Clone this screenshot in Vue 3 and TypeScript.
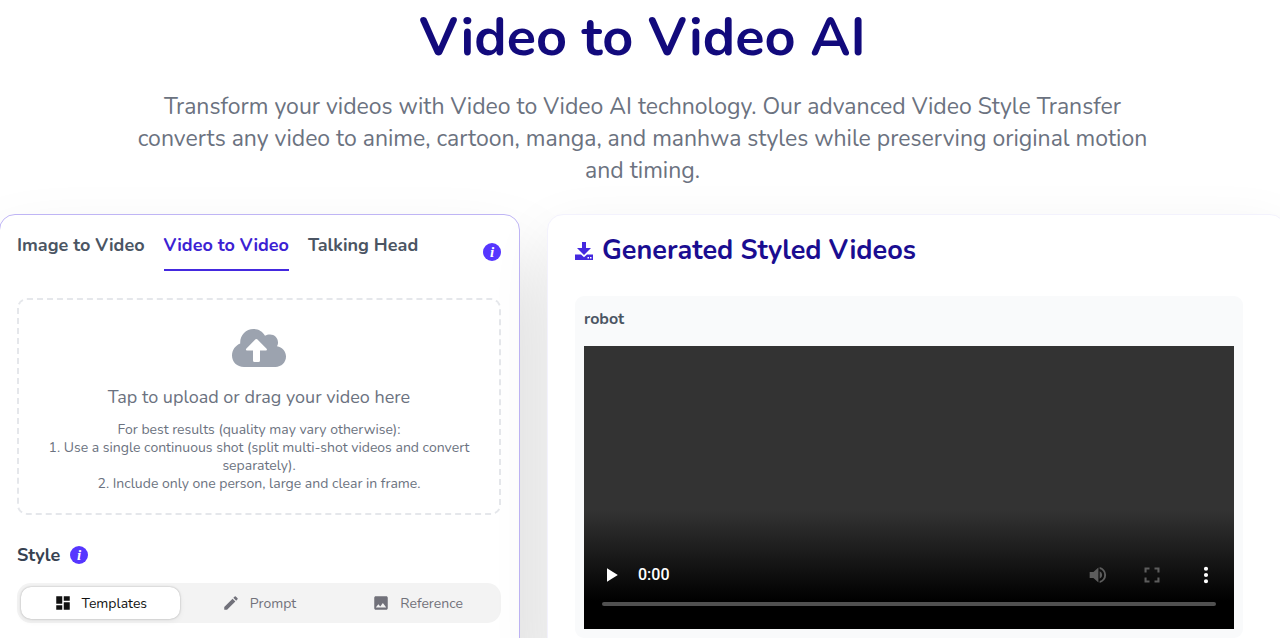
<script setup lang="ts">
import { ref } from 'vue'

const tabs = ['Image to Video', 'Video to Video', 'Talking Head']
const activeTab = ref('Video to Video')

const modes = [
  { name: 'Templates', icon: 'M3 13h8V3H3v10zm0 8h8v-6H3v6zm10 0h8V11h-8v10zm0-18v6h8V3h-8z' },
  {
    name: 'Prompt',
    icon: 'M3 17.25V21h3.75L17.81 9.94l-3.75-3.75L3 17.25zM20.71 7.04a1 1 0 0 0 0-1.41l-2.34-2.34a1 1 0 0 0-1.41 0l-1.83 1.83 3.75 3.75 1.83-1.83z',
  },
  {
    name: 'Reference',
    icon: 'M21 19V5c0-1.1-.9-2-2-2H5c-1.1 0-2 .9-2 2v14c0 1.1.9 2 2 2h14c1.1 0 2-.9 2-2zM8.5 13.5l2.5 3.01L14.5 12l4.5 6H5l3.5-4.5z',
  },
]
const activeMode = ref('Templates')
const position = ref(0)
</script>

<template>
  <main class="page">
    <header class="intro">
      <h1>Video to Video AI</h1>
      <p>
        Transform your videos with Video to Video AI technology. Our advanced Video Style Transfer
        converts any video to anime, cartoon, manga, and manhwa styles while preserving original motion
        and timing.
      </p>
    </header>

    <div class="columns">
      <section class="panel create">
        <div class="tabbar">
          <nav class="tabs">
            <button
              v-for="tab in tabs"
              :key="tab"
              type="button"
              class="tab"
              :class="{ active: tab === activeTab }"
              @click="activeTab = tab"
            >{{ tab }}</button>
          </nav>
          <button type="button" class="info" aria-label="About this tool">i</button>
        </div>

        <button type="button" class="drop">
          <svg class="cloud" viewBox="0 0 54 38" aria-hidden="true">
            <path fill="currentColor" d="M12 38C5 38 0 33 0 26.500C0 21 3.500 16.500 8.200 14.600V13.500C8.200 6 14 0 21.500 0C26.500 0 30.500 2.500 33 6.700C34.500 5.900 36 5.500 38 5.500C42.500 5.500 46 9 46 13.500C46 15 45.700 16 45 17.300C50.200 18.200 54 22.500 54 27.600C54 33.500 49.200 38 43.500 38Z" />
            <path fill="#fff" d="M25.200 10.300L34.600 19.800Q35.500 21.500 34 21.500H28V31.500Q28 33 26.500 33H22.500Q21 33 21 31.500V21.500H15Q13.300 21.500 14.200 19.800L23.500 10.300Q24.300 9.600 25.200 10.300Z" />
          </svg>
          <span class="drop-title">Tap to upload or drag your video here</span>
          <span class="drop-help">
            For best results (quality may vary otherwise):<br />
            1. Use a single continuous shot (split multi-shot videos and convert separately).<br />
            2. Include only one person, large and clear in frame.
          </span>
        </button>

        <div class="style-head">
          <h2>Style</h2>
          <button type="button" class="info" aria-label="About styles">i</button>
        </div>
        <div class="modes">
          <button
            v-for="mode in modes"
            :key="mode.name"
            type="button"
            class="mode"
            :class="{ active: mode.name === activeMode }"
            @click="activeMode = mode.name"
          >
            <svg viewBox="0 0 24 24" aria-hidden="true"><path fill="currentColor" :d="mode.icon" /></svg>
            <span>{{ mode.name }}</span>
          </button>
        </div>
      </section>

      <section class="panel results">
        <h2 class="results-title">
          <svg viewBox="0 0 18 18" aria-hidden="true">
            <path fill="currentColor" d="M7 0h4v6h5L9 13 2 6h5z" />
            <path fill="currentColor" fill-rule="evenodd" d="M0 12.500h6L9 15.200l3-2.700H18V18H0zM12.500 15v1.500H14V15zM15 15v1.500h1.500V15z" />
          </svg>
          <span>Generated Styled Videos</span>
        </h2>
        <article class="result">
          <h3>robot</h3>
          <div class="player">
            <div class="controls">
              <button type="button" class="control play" aria-label="Play">
                <svg viewBox="0 0 24 24"><path fill="currentColor" d="M6 4v16l13-8z" /></svg>
              </button>
              <span class="time">0:00</span>
              <button type="button" class="control" aria-label="Mute" disabled>
                <svg viewBox="0 0 24 24"><path fill="currentColor" d="M2 8.500v7h4.500l6 5.500V3L6.500 8.500zM17 12a4.800 4.800 0 0 0-3-4.500v9a4.800 4.800 0 0 0 3-4.500zM14 2.500v2.300a7.500 7.500 0 0 1 0 14.400v2.300a9.700 9.700 0 0 0 0-19z" /></svg>
              </button>
              <button type="button" class="control" aria-label="Full screen" disabled>
                <svg viewBox="0 0 24 24"><path fill="currentColor" d="M5.500 15H3v6h6v-2.500H5.500zM3 9h2.500V5.500H9V3H3zm15.500 9.500H15V21h6v-6h-2.500zM15 3v2.500h3.500V9H21V3z" /></svg>
              </button>
              <button type="button" class="control" aria-label="More options">
                <svg viewBox="0 0 24 24"><path fill="currentColor" d="M12 7a2.500 2.500 0 1 0 0-5 2.500 2.500 0 0 0 0 5zm0 2.500a2.500 2.500 0 1 0 0 5 2.500 2.500 0 0 0 0-5zm0 7.500a2.500 2.500 0 1 0 0 5 2.500 2.500 0 0 0 0-5z" /></svg>
              </button>
            </div>
            <input v-model="position" class="seek" type="range" min="0" max="100" aria-label="Playback position" />
          </div>
        </article>
      </section>
    </div>
  </main>
</template>

<style>
body {
  margin: 0;
  background: #fff;
}
html {
  overflow: hidden;
}
</style>

<style scoped>
.page {
  margin: 0 -6px 0 -1px;
  font-family: Nunito, Lato, sans-serif;
  color: #374151;
}
h1,
h2,
h3,
p {
  margin: 0;
}
button {
  margin: 0;
  padding: 0;
  border: 0;
  background: none;
  color: inherit;
  font: inherit;
  cursor: pointer;
}
svg {
  display: block;
}
.intro {
  max-width: 1020px;
  margin: 0 auto;
  padding-bottom: 27px;
  text-align: center;
}
h1 {
  padding: 4px 0 21px;
  font-size: 54px;
  line-height: 66px;
  font-weight: 700;
  color: #120a7c;
}
.intro p {
  font-size: 23px;
  line-height: 32px;
  color: #6b7280;
}
.columns {
  display: grid;
  grid-template-columns: 521fr 739fr;
  gap: 27px;
}
.panel {
  box-sizing: border-box;
  background: #fff;
  border-radius: 16px;
}
.create {
  padding: 18px 18px 20px 17px;
  border: 1px solid #bfb5f5;
  box-shadow: 0 50px 80px rgba(0, 0, 0, 0.17);
}
.results {
  padding: 20px 42px 24px 27px;
  border: 1px solid #f3f2fd;
  box-shadow: 0 20px 60px rgba(0, 0, 0, 0.08);
}
.tabbar {
  display: flex;
  align-items: center;
  justify-content: space-between;
}
.tabs {
  display: flex;
  gap: 19px;
}
.tab {
  padding-bottom: 12px;
  border-bottom: 2px solid transparent;
  font-size: 18px;
  line-height: 24px;
  font-weight: 700;
  color: #4b5563;
}
.tab.active {
  color: #3c22d3;
  border-color: #4429df;
}
.info {
  width: 18px;
  height: 18px;
  border-radius: 50%;
  background: #5636ff;
  color: #fff;
  font: italic 700 15px/18px "Liberation Serif", serif;
}
.drop {
  display: flex;
  flex-direction: column;
  align-items: center;
  box-sizing: border-box;
  width: 100%;
  margin-top: 27px;
  padding: 29px 26px 20px;
  border: 2px dashed #e5e7eb;
  border-radius: 10px;
  color: #6b7280;
}
.cloud {
  width: 54px;
  height: 38px;
  color: #9ca3af;
}
.drop-title {
  margin-top: 17px;
  font-size: 18px;
  line-height: 26px;
}
.drop-help {
  margin-top: 11px;
  font-size: 14px;
  line-height: 18px;
}
.style-head {
  display: flex;
  align-items: center;
  gap: 10px;
  margin-top: 27px;
}
.style-head h2 {
  font-size: 18px;
  line-height: 26px;
  font-weight: 700;
}
.modes {
  display: grid;
  grid-template-columns: repeat(3, 1fr);
  margin-top: 15px;
  padding: 4px;
  border-radius: 14px;
  background: #f3f3f3;
}
.mode {
  display: flex;
  align-items: center;
  justify-content: center;
  gap: 10px;
  height: 32px;
  border-radius: 10px;
  font-size: 14px;
  color: #71717a;
}
.mode.active {
  background: #fff;
  color: #111;
  box-shadow: 0 0 2px rgba(0, 0, 0, 0.3), 0 2px 6px rgba(0, 0, 0, 0.06);
}
.mode svg {
  width: 18px;
  height: 18px;
}
.results-title {
  display: flex;
  align-items: center;
  gap: 9px;
  font-size: 27px;
  line-height: 32px;
  font-weight: 700;
  color: #1a0d91;
}
.results-title svg {
  width: 18px;
  height: 18px;
  color: #4429df;
}
.result {
  margin-top: 29px;
  padding: 9px;
  border-radius: 9px;
  background: #f9fafb;
}
.result h3 {
  font-size: 16px;
  line-height: 28px;
  font-weight: 700;
  color: #4b5563;
}
.player {
  display: flex;
  flex-direction: column;
  justify-content: flex-end;
  height: 283px;
  margin-top: 13px;
  box-sizing: border-box;
  padding: 0 18px 23px;
  background: linear-gradient(#333 0, #333 58%, #000 90%);
}
.controls {
  display: flex;
  align-items: center;
  gap: 34px;
  color: #fff;
}
.control svg {
  width: 20px;
  height: 20px;
}
.control:disabled {
  color: #5d5d5d;
}
.time {
  flex: 1;
  margin-left: -18px;
  font: 500 16px/20px Roboto, sans-serif;
}
.seek {
  appearance: none;
  display: block;
  width: 100%;
  height: 4px;
  margin: 17px 0 0;
  border-radius: 2px;
  background: #505050;
}
.seek::-webkit-slider-thumb {
  appearance: none;
  width: 0;
  height: 0;
}
</style>
